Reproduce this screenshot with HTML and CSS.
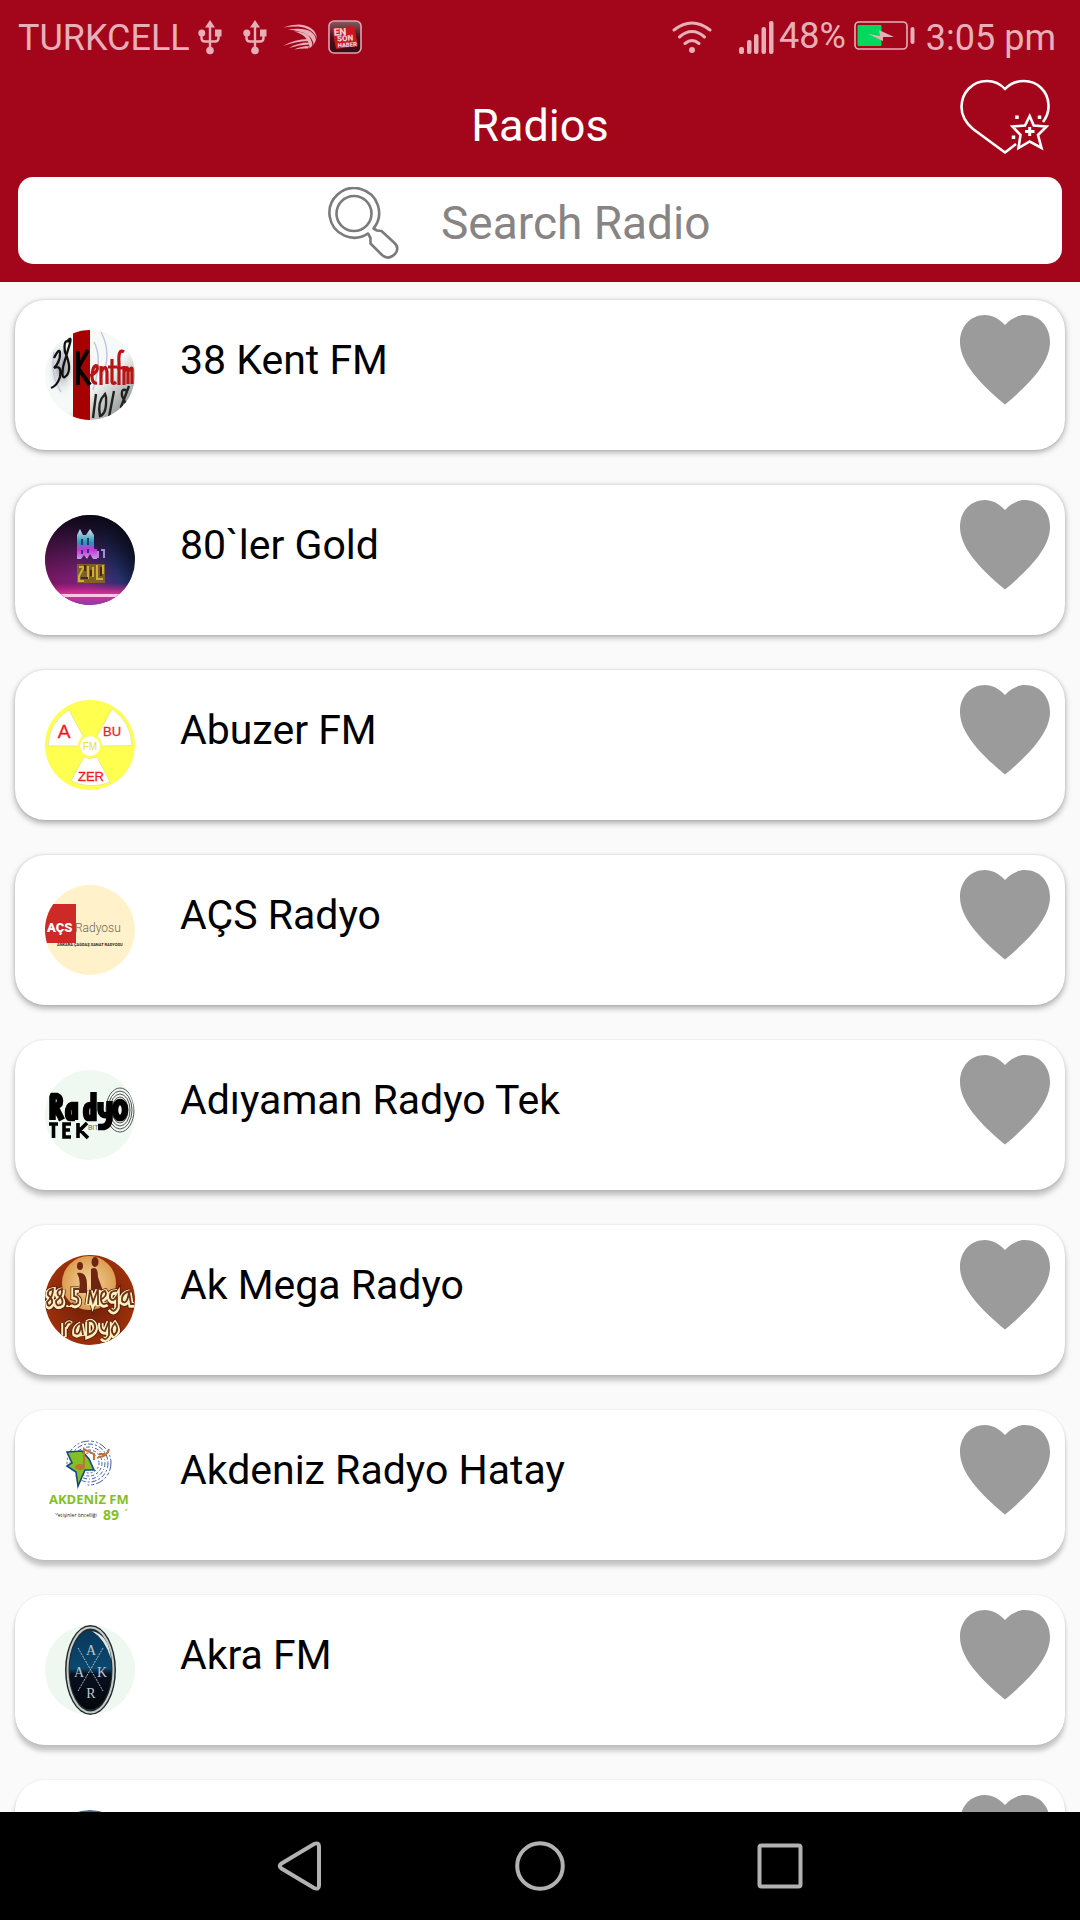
FILE: index.html
```html
<!DOCTYPE html>
<html lang="en">
<head>
<meta charset="utf-8">
<meta name="viewport" content="width=device-width, initial-scale=1">
<title>Radios</title>
<link rel="stylesheet" href="styles.css">
</head>
<body>
<svg class="sprite" aria-hidden="true">
  <symbol id="heart" viewBox="0 0 90 90">
    <path d="M45 10C39 3.500 32 0 25 0 11 0 0 11 0 27 0 47 19 68 45 89.500 71 68 90 47 90 27 90 11 79 0 65 0 58 0 51 3.500 45 10Z"/>
  </symbol>
  <symbol id="usb" viewBox="0 0 24 36">
    <path d="M12 1 17 8.500H7Z"/>
    <path d="M12 6V31M3.500 14V19Q3.500 22.500 7 22.500H17Q20.500 22.500 20.500 19V14" fill="none" stroke="currentColor" stroke-width="2.400"/>
    <circle cx="12" cy="31.500" r="3.800"/><circle cx="3.800" cy="14" r="3.500"/><rect x="17" y="10.500" width="6.500" height="7"/>
  </symbol>
</svg>

<header class="header">
  <div class="status">
    <span>TURKCELL</span>
    <div class="notices">
      <svg class="usb"><use href="#usb"/></svg>
      <svg class="usb"><use href="#usb"/></svg>
      <svg class="swoosh" viewBox="0 0 34 26">
        <path d="M0 3.500Q8 .5 16 .5 33 2 34 15 30 4 15 2.600 7 2.500 0 3.500Z"/>
        <path d="M5 5.500Q31 2 33 16L30.500 21Q30 8 5 5.500Z"/>
        <path d="M11 7.500Q28 7 29.500 21.500L26.500 24.500Q26 11 11 7.500Z"/>
        <path d="M0 22Q12 15 25 15L25.500 17Q12 17.500 0 22ZM6 24Q15 18.500 26 18.500L26 20.500Q16 20.500 6 24ZM11 25.500Q18 22 26 22L25 24.500Q19 24 11 25.500Z"/>
      </svg>
      <svg class="news" viewBox="0 0 34 34">
        <defs><linearGradient id="newsbg" x1="0" y1="0" x2="0" y2="1"><stop offset="0" stop-color="#8b5a62"/><stop offset=".5" stop-color="#4a1019"/><stop offset="1" stop-color="#3a0a12"/></linearGradient></defs>
        <rect x="1" y="1" width="32" height="32" rx="5" fill="url(#newsbg)" stroke="#dba6ad" stroke-width="1.600"/>
        <path d="M4 8 26 6 30 26 8 29Z" fill="#cf1420"/>
        <g fill="#f0cfd3" font-family="Roboto" font-weight="900" transform="rotate(-4 17 17)"><text x="6" y="15" font-size="10">EN</text><text x="9" y="21" font-size="8">SON</text><text x="9" y="27" font-size="6">HABER</text></g>
      </svg>
    </div>
    <div class="signals">
      <svg class="wifi" viewBox="0 0 40 34" fill="none" stroke="currentColor" stroke-width="3" stroke-linecap="round">
        <path d="M2 9Q20-5 38 9M7.500 16Q20 5 32.500 16M13 22.500Q20 16.500 27 22.500"/><circle cx="20" cy="29" r="3" fill="currentColor" stroke="none"/>
      </svg>
      <svg class="bars" viewBox="0 0 36 34">
        <rect x="0" y="26" width="5" height="7" rx="2"/><rect x="8" y="19" width="4.500" height="14" rx="2"/><rect x="15" y="13" width="4.500" height="20" rx="2"/><rect x="22.500" y="6" width="4.500" height="27" rx="2"/><rect x="30" y="0" width="4.500" height="33" rx="2"/>
      </svg>
      <span class="percent">48%</span>
      <svg class="battery" viewBox="0 0 62 30">
        <rect x="1" y="1" width="52" height="27" rx="4" fill="none" stroke="currentColor" stroke-width="1.600"/>
        <rect x="3.500" y="4" width="24" height="21" rx="1" fill="#00d95c"/>
        <path d="M14 13 26 15 25 9 40 16 29 16 29 20Z"/>
        <rect x="56.500" y="6" width="4" height="17" rx="2"/>
      </svg>
      <span>3:05 pm</span>
    </div>
  </div>

  <div class="titlebar">
    <h1 class="title">Radios</h1>
    <button class="favourites" aria-label="Favourites">
      <svg viewBox="0 0 90 84" fill="none" stroke="#fff" stroke-width="2.600" stroke-linejoin="round">
        <path d="M83 47Q89 39 88.500 30C88 16 77 6 64 6 56 6 50 8.500 45 14 40 8.500 34 6 27 6 12 6 1.500 18 1.500 32 1.500 41 6 48 13 54L45 77.500 56 69"/>
        <path stroke-linejoin="miter" d="M69.700 41 73.700 50.500 86.500 51.500 78 60 81.500 73 69.700 66.500 58.500 73 60.500 60 52.500 51.500 65 50.500Z"/>
        <path d="M69.700 52V61M65 56.500H74.500" stroke-width="3"/>
        <path d="M57 40.500V44M79.500 40.500V44M53.500 60.500V64" stroke-width="3.500"/>
      </svg>
    </button>
  </div>

  <form class="search" role="search">
    <label class="search-box">
      <svg viewBox="0 0 72 72" fill="none" stroke="#7b7b7b" stroke-width="2.600" stroke-linejoin="round">
        <circle cx="27" cy="26.500" r="17.500"/>
        <path d="M41 46.500A24.800 24.800 0 1 1 46.500 41.500L50 43.500 54.500 44 67 55.500Q73 61 68 67 61 73.500 55 68L43.500 56.500 43.500 51Z"/>
      </svg>
      <input class="search-input" type="text" placeholder="Search Radio" aria-label="Search Radio">
    </label>
  </form>
</header>

<main class="list">
  <article class="card">
    <svg class="logo" viewBox="0 0 90 90">
      <defs>
        <linearGradient id="kent" x1=".3" y1=".3" x2="1" y2="1"><stop offset=".4" stop-color="#f5faf8"/><stop offset=".85" stop-color="#8f9391"/></linearGradient>
        <radialGradient id="smoke"><stop offset=".2" stop-color="#a9acac"/><stop offset="1" stop-color="#f5faf8" stop-opacity="0"/></radialGradient>
      </defs>
      <rect width="90" height="90" fill="url(#kent)"/>
      <ellipse cx="17" cy="38" rx="16" ry="30" fill="url(#smoke)"/>
      <path d="M9 22Q5 45 16 62M19 20Q12 35 21 50M56 2Q68 25 56 48M49 12Q58 28 48 60" fill="none" stroke="#c7c2e6" stroke-width="1.500"/>
      <rect x="28" width="17" height="90" fill="#a60000"/>
      <path d="M9 28Q15 16 15 24 15 32 9 38 17 34 15 47 12 56 6 58M25 12Q18 8 20 22 27 38 22 45 16 52 18 37L25 13Q27 5 22 12" fill="none" stroke="#111" stroke-width="2.300"/>
      <path d="M33 21V55M43 20 33 38 45 55" fill="none" stroke="#000" stroke-width="4"/>
      <path d="M45 46Q54 42 52 36 48 34 47 46 47 54 52 53M56 36V55M56 42Q61 33 62 42V54M67 29V52Q68 55 71 52M63 37H72M79 22Q73 18 74 33V55M72 38H79M79 36V55M79 42Q83 33 83 42V54M83 42Q88 34 87 42V54" fill="none" stroke="#b81414" stroke-width="3.200"/>
      <path d="M51 64 48 88M60 64Q52 72 55 86 62 84 61 67ZM69 61 64 87M82 61Q76 57 77 66L83 78Q77 85 76 77L84 56" fill="none" stroke="#222" stroke-width="2.400"/>
    </svg>
    <h2 class="name">38 Kent FM</h2>
    <button class="like" aria-label="Favourite"><svg><use href="#heart"/></svg></button>
  </article>

  <article class="card">
    <svg class="logo" viewBox="0 0 90 90">
      <defs>
        <linearGradient id="night" x1="0" y1=".7" x2="1" y2=".4"><stop offset="0" stop-color="#75165f"/><stop offset=".4" stop-color="#79217a"/><stop offset=".75" stop-color="#28316f"/><stop offset="1" stop-color="#0b162c"/></linearGradient>
        <linearGradient id="dusk" x1="0" y1="0" x2="0" y2="1"><stop offset="0" stop-color="#0b0713"/><stop offset=".7" stop-color="#0b0713" stop-opacity="0"/></linearGradient>
        <linearGradient id="floor" x1="0" y1="0" x2="0" y2="1"><stop offset="0" stop-color="#d32692" stop-opacity="0"/><stop offset=".5" stop-color="#e02e95"/><stop offset="1" stop-color="#8c3aa8"/></linearGradient>
        <linearGradient id="neon" x1="0" y1="0" x2="0" y2="1"><stop offset="0" stop-color="#d7e2ea"/><stop offset=".45" stop-color="#2398b8"/><stop offset=".7" stop-color="#d62de0"/><stop offset="1" stop-color="#b9a4e0"/></linearGradient>
      </defs>
      <rect width="90" height="90" fill="url(#night)"/><rect width="90" height="90" fill="url(#dusk)"/>
      <rect y="68" width="90" height="22" fill="url(#floor)"/><rect y="79" width="90" height="3" fill="#ffc4e8"/>
      <path d="M32 20 35 14 38 20 41 20 45 14 49 20V34H52V44H48L45 39 42 44 39 40 36 44H32Z" fill="url(#neon)"/>
      <path d="M53 36V43M56 35H59V43" fill="none" stroke="#b087dc" stroke-width="2"/>
      <path d="M37 24V30M43 23V30M37 35V39M43 34V38" stroke="#29386f" stroke-width="2"/>
      <path d="M32 49H60V68H32Z" fill="#7d602a"/>
      <path d="M34 52H39L34 61V66H39M43 51V64M48 62V52M52 50V64H58M58 50V59" fill="none" stroke="#d0ae36" stroke-width="2"/>
      <path d="M40 50V56M46 55V61M56 52V61M36 63H43" stroke="#49222e" stroke-width="2"/>
    </svg>
    <h2 class="name">80`ler Gold</h2>
    <button class="like" aria-label="Favourite"><svg><use href="#heart"/></svg></button>
  </article>

  <article class="card">
    <svg class="logo" viewBox="0 0 90 90">
      <rect width="90" height="90" fill="#ffff50"/>
      <path d="M3 46Q4 22 24 10L38 36Q34 40 34 46ZM87 45.500Q86 22 67 9L52 36Q56 40 56 46ZM39 57 26 81Q45 90 65 82L52 57Q45 60 39 57Z" fill="#fff" stroke="#d9d98a" stroke-width=".6"/>
      <circle cx="45" cy="46" r="11" fill="#fff" stroke="#ffff50" stroke-width="2"/>
      <g font-family="Liberation Sans" text-anchor="middle" fill="#ee1c25" stroke="#ee1c25" stroke-width=".3"><text x="19" y="38" font-size="19">A</text><text x="67" y="36" font-size="13">BU</text><text x="46" y="81" font-size="13">ZER</text></g>
      <text x="45" y="50" font-family="Liberation Sans" font-size="10" text-anchor="middle" fill="#e2e23f">FM</text>
    </svg>
    <h2 class="name">Abuzer FM</h2>
    <button class="like" aria-label="Favourite"><svg><use href="#heart"/></svg></button>
  </article>

  <article class="card">
    <svg class="logo" viewBox="0 0 90 90">
      <rect width="90" height="90" fill="#fff1c9"/><rect y="19" width="31" height="39" fill="#cc2927"/>
      <text x="2" y="47" font-family="Roboto" font-weight="900" font-size="13" fill="#fff">AÇS</text>
      <text x="30" y="47" font-family="Roboto" font-weight="300" font-size="12" fill="#6d6657">Radyosu</text>
      <text x="12" y="61" font-family="Roboto" font-weight="700" font-size="4" fill="#2b2620">ANKARA ÇAĞDAŞ SANAT RADYOSU</text>
    </svg>
    <h2 class="name">AÇS Radyo</h2>
    <button class="like" aria-label="Favourite"><svg><use href="#heart"/></svg></button>
  </article>

  <article class="card">
    <svg class="logo" viewBox="0 0 90 90">
      <rect width="90" height="90" fill="#f0f8f2"/>
      <g fill="none" stroke="#555" stroke-width="1"><ellipse cx="75" cy="40" rx="14" ry="22"/><ellipse cx="75" cy="40" rx="12" ry="19"/><ellipse cx="75" cy="40" rx="10" ry="16"/><ellipse cx="75" cy="40" rx="8" ry="13"/></g>
      <g fill="none" stroke="#000" stroke-width="6.500">
        <path d="M7.500 50V26H12Q15 27 15 31 15 36 10 36L17 50"/>
        <path d="M30 50V35H27Q23 36 23 43 23 48 25 48H30"/>
        <path d="M48.500 22V48H43Q41 47 41 42 41 35 45 35H48"/>
        <path d="M55.500 32V40Q56 46 62 45M64.500 31V48Q64 57 57 57H53"/>
        <ellipse cx="75" cy="40" rx="5" ry="8"/>
      </g>
      <path d="M4 54H13M8.500 54V68M26 54H19V67H26M19 60H25M33 53V68M42 53 35 60 43 68" fill="none" stroke="#000" stroke-width="3.600"/>
      <text x="43" y="60" font-family="Roboto" font-size="7" fill="#666">BIT</text>
    </svg>
    <h2 class="name">Adıyaman Radyo Tek</h2>
    <button class="like" aria-label="Favourite"><svg><use href="#heart"/></svg></button>
  </article>

  <article class="card">
    <svg class="logo" viewBox="0 0 90 90">
      <defs>
        <radialGradient id="rust"><stop offset="0" stop-color="#6a1c08"/><stop offset="1" stop-color="#9c300a"/></radialGradient>
        <radialGradient id="moon"><stop offset="0" stop-color="#f4d69c"/><stop offset="1" stop-color="#dc9d50"/></radialGradient>
        <path id="megatext" d="M8 34Q2 35 3 40 8 44 7 48 3 54 2 47 8 42 8 34ZM17 34Q11 35 13 40 19 44 17 49 11 53 11 46 18 41 17 34M24 49V51M34 34H29V41Q35 42 33 48 30 51 27 48M43 49 45 35 48 47 53 34V50M57 44Q63 40 60 36 55 37 56 45 57 51 62 48M72 36Q64 35 65 43 68 48 72 41V52Q69 59 65 53M85 36Q76 38 77 46 82 51 84 37L86 49H89M19 67V81M20 72Q23 65 26 68M36 68Q29 71 30 78 35 82 36 68L38 80M43 66V80Q53 76 49 68 46 64 42 67M56 67Q55 76 60 76L64 66V80Q61 87 57 82M70 68Q64 75 69 80 75 75 70 68Z"/>
      </defs>
      <rect width="90" height="90" fill="url(#rust)"/><circle cx="44" cy="28" r="27" fill="url(#moon)"/>
      <g fill="#702513"><ellipse cx="35" cy="11" rx="3" ry="4"/><ellipse cx="50" cy="7" rx="3.500" ry="5"/><path d="M32 18Q42 16 42 30V38H33Q37 27 32 18ZM46 14Q53 10 53 22L58 36H46Z"/></g>
      <use href="#megatext" y="1" fill="none" stroke="#4a1908" stroke-width="7"/>
      <use href="#megatext" y="1" fill="none" stroke="#ffefc0" stroke-width="5.500"/>
      <use href="#megatext" fill="none" stroke="#6b3418" stroke-width="1.800"/>
    </svg>
    <h2 class="name">Ak Mega Radyo</h2>
    <button class="like" aria-label="Favourite"><svg><use href="#heart"/></svg></button>
  </article>

  <article class="card">
    <svg class="logo" viewBox="0 0 90 90">
      <g fill="none" stroke="#3d5ca5" stroke-width="1"><circle cx="44" cy="23" r="22" stroke-dasharray="8 2 3 2 2 2"/><circle cx="44" cy="23" r="19" stroke-dasharray="5 2 2 2"/><circle cx="44" cy="23" r="16" stroke-dasharray="4 2 1 2"/><circle cx="44" cy="23" r="13" stroke-dasharray="3 2"/><circle cx="44" cy="23" r="10" stroke-dasharray="2 2"/></g>
      <path d="M16 18 30 34 33 48H45L36 40 33 48H18Z" fill="#fff"/>
      <path d="M22 12 37 11 44 19 49 30 40 30 33 46 31 32 22 26 27 23Z" fill="#84bf26" stroke="#16458a" stroke-width="1.600"/>
      <path d="M39 28V9L49 14V20M53 17Q62 17 64 9M54 14H60" fill="none" stroke="#bd7434" stroke-width="2"/><ellipse cx="35" cy="27" rx="5" ry="3" fill="#bd7434"/>
      <text x="4" y="64" font-family="Open Sans" font-weight="700" font-size="13" fill="#84bf26">AKDENİZ FM</text>
      <text x="10" y="77" font-family="Open Sans" font-size="5" fill="#222">Yetişinler öncelliği</text>
      <text x="58" y="80" font-family="Open Sans" font-weight="700" font-size="14" fill="#84bf26">89</text><path d="M80 70H83" stroke="#84bf26"/>
    </svg>
    <h2 class="name">Akdeniz Radyo Hatay</h2>
    <button class="like" aria-label="Favourite"><svg><use href="#heart"/></svg></button>
  </article>

  <article class="card">
    <svg class="logo" viewBox="0 0 90 90">
      <defs><linearGradient id="akra" x1="0" y1="0" x2="0" y2="1"><stop offset="0" stop-color="#07385b"/><stop offset=".48" stop-color="#0b486f"/><stop offset=".55" stop-color="#07111f"/><stop offset="1" stop-color="#03060c"/></linearGradient></defs>
      <rect width="90" height="90" fill="#eff8f0"/>
      <ellipse cx="45.500" cy="45" rx="25.500" ry="45" fill="#222b2d"/>
      <ellipse cx="45.500" cy="45" rx="23" ry="42.500" fill="none" stroke="#c5ccca" stroke-width="2"/>
      <ellipse cx="45.500" cy="45" rx="21" ry="39.500" fill="url(#akra)"/>
      <path d="M47 6Q64 10 66 34 60 14 47 6Z" fill="#e0e8e5"/>
      <path d="M33 23 58 66M58 23 33 66" stroke="#aebac2" stroke-width="1" stroke-dasharray="2 1"/>
      <g font-family="Liberation Serif" font-size="14" fill="#bdc9d0" text-anchor="middle"><text x="46" y="30">A</text><text x="34" y="52">A</text><text x="57" y="52">K</text><text x="46" y="73">R</text></g>
    </svg>
    <h2 class="name">Akra FM</h2>
    <button class="like" aria-label="Favourite"><svg><use href="#heart"/></svg></button>
  </article>

  <article class="card">
    <svg class="logo" viewBox="0 0 90 90"><circle cx="45" cy="45" r="45" fill="#4b6590"/></svg>
    <button class="like" aria-label="Favourite"><svg><use href="#heart"/></svg></button>
  </article>
</main>

<nav class="navbar">
  <button class="key" aria-label="Back"><svg viewBox="0 0 50 50"><path d="M6.500 22.500 39 3Q44 1 44 5.500V44.500Q44 49 39 47L6.500 27.500Q3 25 6.500 22.500Z"/></svg></button>
  <button class="key" aria-label="Home"><svg viewBox="0 0 50 50"><circle cx="25" cy="25" r="22.800"/></svg></button>
  <button class="key" aria-label="Recent apps"><svg viewBox="0 0 50 50"><rect x="4.500" y="4.500" width="41" height="41" rx="2"/></svg></button>
</nav>
</body>
</html>
```
FILE: styles.css
```css
* {
  box-sizing: border-box;
}

body {
  margin: 0;
  height: 100vh;
  display: flex;
  flex-direction: column;
  background: #fafafa;
  font-family: Roboto, "Liberation Sans", sans-serif;
}

button {
  padding: 0;
  border: 0;
  background: none;
}

svg {
  display: block;
}

.sprite {
  position: absolute;
  width: 0;
  height: 0;
}

.header {
  flex: none;
  background: #a3051a;
  color: #fff;
}

/* System status bar */
.status {
  display: flex;
  align-items: center;
  height: 75px;
  padding: 0 24px 0 18px;
  font-size: 36px;
  color: #e7b0b8;
}

.status svg {
  fill: currentColor;
}

.status svg[fill="none"] {
  fill: none;
}

.notices {
  display: flex;
  align-items: center;
  margin-left: 8px;
  padding-bottom: 2px;
}

.usb {
  width: 24px;
  height: 36px;
  margin-right: 21px;
}

.swoosh {
  width: 34px;
  height: 26px;
  margin-right: 11px;
  margin-left: -5px;
}

.news {
  width: 34px;
  height: 34px;
}

.signals {
  display: flex;
  align-items: center;
  margin-left: auto;
}

.wifi {
  width: 40px;
  height: 34px;
  margin-right: 27px;
}

.bars {
  width: 36px;
  height: 34px;
  margin-right: 4px;
}

.percent {
  padding-bottom: 4px;
}

.battery {
  width: 62px;
  height: 30px;
  margin: 0 10px 4px 8px;
}

/* Title row */
.titlebar {
  display: grid;
  grid-template-columns: 1fr auto 1fr;
  padding: 0 30px;
}

.title {
  grid-column: 2;
  margin: 0;
  font-size: 45px;
  font-weight: 400;
  line-height: 102px;
}

.favourites {
  justify-self: end;
  align-self: start;
}

.favourites svg {
  width: 90px;
  height: 84px;
}

.search {
  padding: 0 18px 18px;
}

.search-box {
  display: flex;
  align-items: center;
  justify-content: center;
  gap: 42px;
  height: 87px;
  padding-top: 5px;
  border-radius: 15px;
  background: #fff;
}

.search-box svg {
  flex: none;
  width: 72px;
  height: 72px;
}

.search-input {
  width: 312px;
  padding: 0;
  border: 0;
  outline: 0;
  background: none;
  color: #000;
  font: 46px/60px Roboto, "Liberation Sans", sans-serif;
}

.search-input::placeholder {
  color: #878483;
  opacity: 1;
}

/* Station list */
.list {
  flex: 1;
  min-height: 0;
  display: flex;
  flex-direction: column;
  gap: 35px;
  padding: 18px 15px;
  overflow-y: auto;
  scrollbar-width: none;
}

.card {
  flex: none;
  display: flex;
  align-items: flex-start;
  height: 150px;
  padding: 15px 15px 30px 30px;
  border-radius: 30px;
  background: #fff;
  box-shadow: 0 2px 6px rgba(0, 0, 0, 0.34), 0 0 2px rgba(0, 0, 0, 0.12);
}

.card:nth-child(n + 3) {
  box-shadow: 0 3px 6px rgba(0, 0, 0, 0.32), 0 0 2px rgba(0, 0, 0, 0.14);
}

.card:nth-child(n + 5) {
  box-shadow: 0 5px 6px rgba(0, 0, 0, 0.26), 0 0 2px rgba(0, 0, 0, 0.14);
}

.card:nth-child(n + 7) {
  box-shadow: 0 6px 5px rgba(0, 0, 0, 0.22), 0 0 2px rgba(0, 0, 0, 0.12);
}

.logo {
  flex: none;
  width: 90px;
  height: 90px;
  margin-top: 15px;
  border-radius: 50%;
}

.name {
  margin: 15px 0 0 45px;
  font-size: 41px;
  font-weight: 400;
  line-height: 60px;
  color: #000;
}

.like {
  flex: none;
  margin-left: auto;
}

.like svg {
  width: 90px;
  height: 90px;
  fill: #9b9b9b;
}

/* System navigation keys */
.navbar {
  flex: none;
  display: flex;
  justify-content: center;
  height: 108px;
  background: #000;
}

.key {
  display: flex;
  align-items: center;
  justify-content: center;
  width: 240px;
}

.key svg {
  width: 50px;
  height: 50px;
  fill: none;
  stroke: #b2b2b2;
  stroke-width: 4px;
}
```
